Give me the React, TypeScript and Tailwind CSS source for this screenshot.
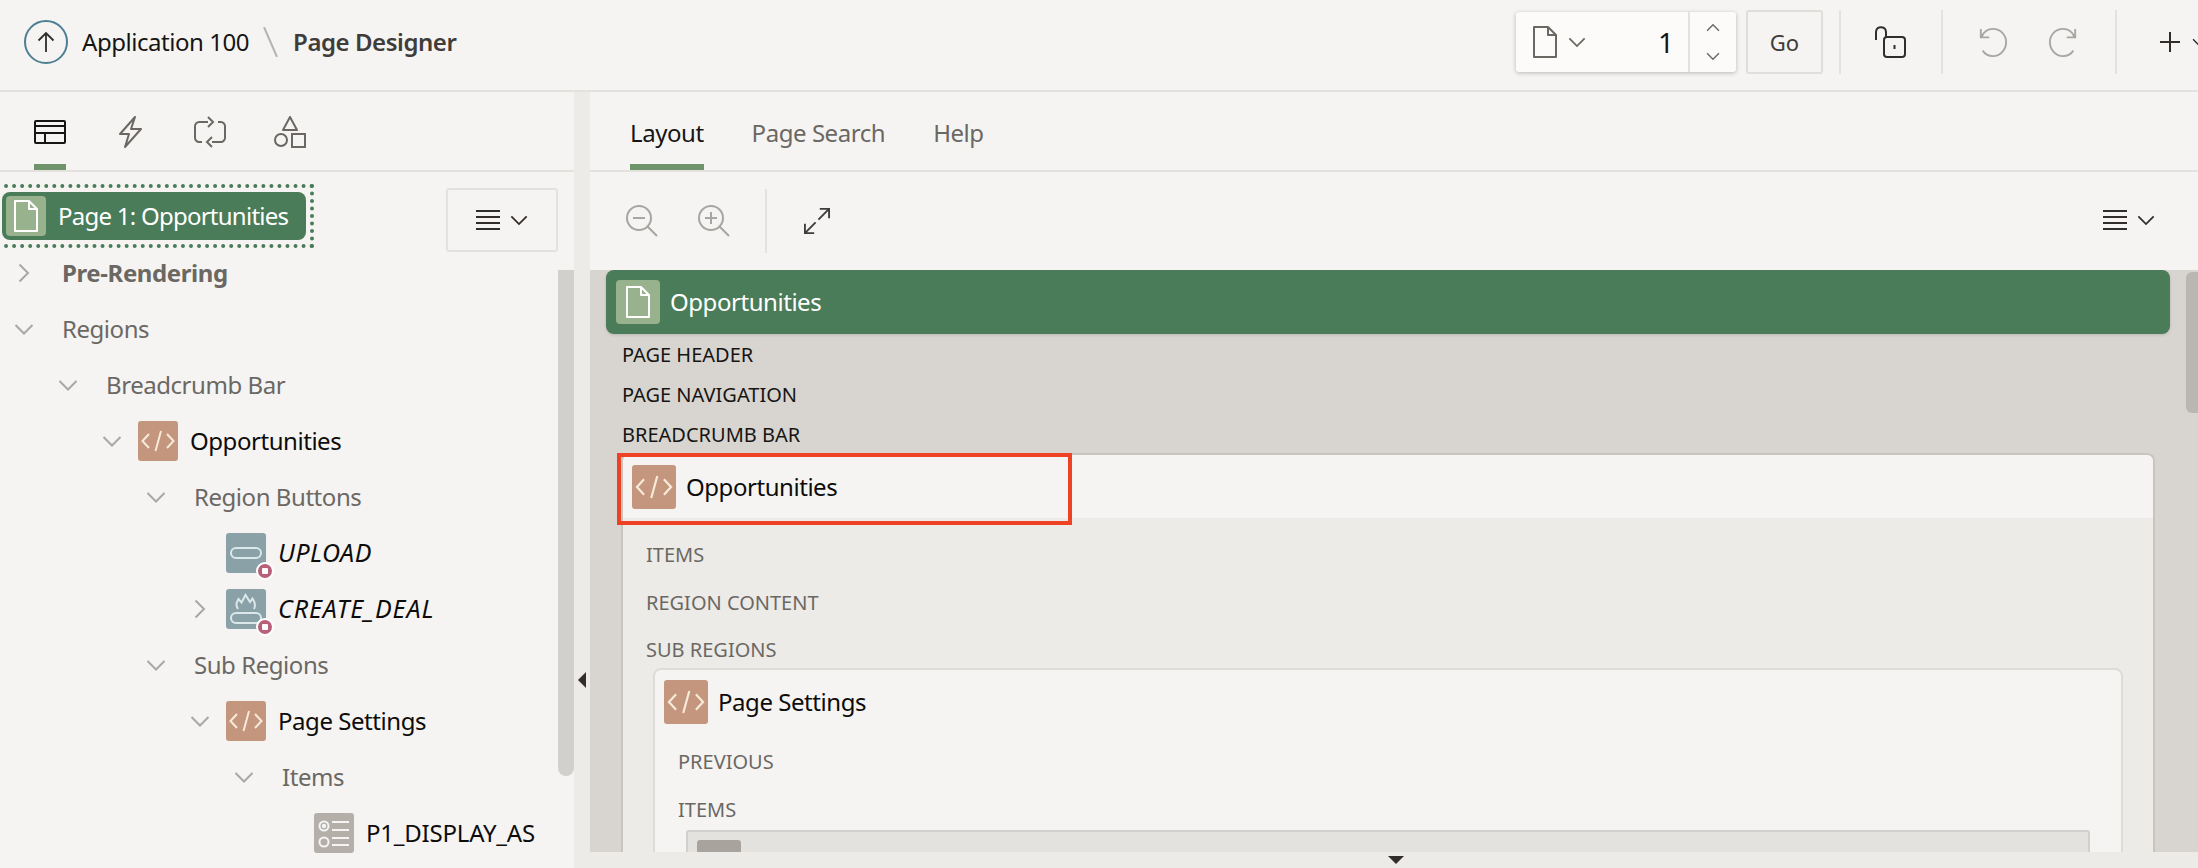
import React from "react";

const Chev = ({ dir = "down", cls = "w-5 h-5 text-[#a9a7a3]", sw = 2 }: { dir?: "down" | "right" | "up"; cls?: string; sw?: number }) => (
  <svg viewBox="0 0 20 20" className={cls} fill="none" stroke="currentColor" strokeWidth={sw}>
    {dir === "down" && <path d="M1.5 6 L10 14.5 L18.5 6" />}
    {dir === "up" && <path d="M1.5 14 L10 5.5 L18.5 14" />}
    {dir === "right" && <path d="M5.5 1.5 L14 10 L5.5 18.5" />}
  </svg>
);

const Doc = ({ cls, sw = 2 }: { cls: string; sw?: number }) => (
  <svg viewBox="0 0 24 32" className={cls} fill="none" stroke="currentColor" strokeWidth={sw}>
    <path d="M1 1 H15 L23 9 V31 H1 Z M15 1 V9 H23" strokeLinejoin="round" />
  </svg>
);

const Lines = ({ cls }: { cls: string }) => (
  <svg viewBox="0 0 24 24" className={cls} fill="none" stroke="currentColor" strokeWidth="2">
    <path d="M0 3 H24 M0 9 H24 M0 15 H24 M0 21 H24" />
  </svg>
);

const CodeTile = ({ cls = "w-10 h-10" }: { cls?: string }) => (
  <div className={`${cls} shrink-0 rounded-[3px] bg-[#c4967d] flex items-center justify-center`}>
    <svg viewBox="0 0 40 40" className="w-full h-full" fill="none" stroke="#f8ead9" strokeWidth="2">
      <path d="M11 13 L4.5 20 L11 27 M29 13 L35.5 20 L29 27 M23 10 L17.5 30" />
    </svg>
  </div>
);

const Badge = () => (
  <span className="absolute -right-[8px] -bottom-[7px] w-[18px] h-[18px] rounded-full bg-[#b8607a] border-2 border-white flex items-center justify-center">
    <span className="w-[6px] h-[6px] rounded-[1px] bg-white" />
  </span>
);

const ButtonTile = () => (
  <div className="relative w-10 h-10 shrink-0 rounded-[3px] bg-[#8aa1a8]">
    <svg viewBox="0 0 40 40" className="w-full h-full" fill="none" stroke="#dbe8ea" strokeWidth="2">
      <rect x="5" y="15" width="30" height="10" rx="5" />
    </svg>
    <Badge />
  </div>
);

const FlameTile = () => (
  <div className="relative w-10 h-10 shrink-0 rounded-[3px] bg-[#8aa1a8]">
    <svg viewBox="0 0 40 40" className="w-full h-full" fill="none" stroke="#dbe8ea" strokeWidth="2">
      <rect x="5" y="24" width="30" height="10" rx="5" />
      <path d="M12 20 C9 15 11 13 12.5 10 L15.500 13.500 L19.500 6 L24 13 L26.500 9.500 C29 13 30 16 28 20" />
    </svg>
    <Badge />
  </div>
);

const RadioTile = () => (
  <div className="w-10 h-10 shrink-0 rounded-[3px] bg-[#b4afa9]">
    <svg viewBox="0 0 40 40" className="w-full h-full" fill="none" stroke="#f5f4f2" strokeWidth="2">
      <circle cx="10" cy="13" r="4.5" />
      <circle cx="10" cy="13" r="1.2" fill="#f5f4f2" />
      <circle cx="10" cy="29" r="4.5" />
      <path d="M18 9 H35 M18 17 H35 M18 25 H35 M18 32 H35" />
    </svg>
  </div>
);

type RowProps = {
  pad: string;
  chev?: "down" | "right";
  tile?: React.ReactNode;
  text: string;
  textCls: string;
};

const Row = ({ pad, chev, tile, text, textCls }: RowProps) => (
  <div className={`h-14 flex items-center ${pad}`}>
    <span className="w-5 h-5 shrink-0">{chev && <Chev dir={chev} />}</span>
    {tile ? (
      <>
        <span className="ml-4 mr-3 shrink-0 flex">{tile}</span>
        <span className={textCls}>{text}</span>
      </>
    ) : (
      <span className={`ml-7 ${textCls}`}>{text}</span>
    )}
  </div>
);

const grayText = "text-[#6b6864] text-[24px] tracking-[-0.45px]";
const blackText = "text-[#0d0c0b] text-[24px] tracking-[-0.45px]";

const Tree = () => (
  <div className="-mt-[7px]">
    <Row pad="pl-[14px]" chev="right" text="Pre-Rendering" textCls="text-[#6b6864] text-[24px] tracking-[-0.4px] font-bold" />
    <Row pad="pl-[14px]" chev="down" text="Regions" textCls={grayText} />
    <Row pad="pl-[58px]" chev="down" text="Breadcrumb Bar" textCls={grayText} />
    <Row pad="pl-[102px]" chev="down" tile={<CodeTile />} text="Opportunities" textCls={blackText} />
    <Row pad="pl-[146px]" chev="down" text="Region Buttons" textCls={grayText} />
    <Row pad="pl-[190px]" tile={<ButtonTile />} text="UPLOAD" textCls="text-[#0d0c0b] text-[25px] italic tracking-[0.5px]" />
    <Row pad="pl-[190px]" chev="right" tile={<FlameTile />} text="CREATE_DEAL" textCls="text-[#0d0c0b] text-[25px] italic tracking-[1px]" />
    <Row pad="pl-[146px]" chev="down" text="Sub Regions" textCls={grayText} />
    <Row pad="pl-[190px]" chev="down" tile={<CodeTile />} text="Page Settings" textCls={blackText} />
    <Row pad="pl-[234px]" chev="down" text="Items" textCls={grayText} />
    <Row pad="pl-[278px]" tile={<RadioTile />} text="P1_DISPLAY_AS" textCls="text-[#0d0c0b] text-[24px] tracking-[-0.2px]" />
  </div>
);

const Header = () => (
  <header className="h-[92px] shrink-0 border-b-2 border-[#e4e2df] flex items-center pl-6 pb-[6px] overflow-hidden">
    <div className="w-11 h-11 rounded-full border-2 border-[#4d7f92] flex items-center justify-center">
      <svg viewBox="0 0 24 24" className="w-6 h-6" fill="none" stroke="#312d2a" strokeWidth="1.8">
        <path d="M12 22 V3 M4.5 10.5 L12 3 L19.500 10.500" />
      </svg>
    </div>
    <span className="ml-[14px] text-[24px] tracking-[-0.45px] text-[#161513]">Application 100</span>
    <svg viewBox="0 0 15 30" className="ml-[14px] w-[15px] h-[30px]" fill="none" stroke="#b5b3af" strokeWidth="2">
      <path d="M1 0 L14 30" />
    </svg>
    <span className="ml-[15px] text-[24px] tracking-[-0.45px] font-semibold text-[#3f3c3a]">Page Designer</span>

    <div className="ml-auto flex items-center">
      <div className="w-[220px] h-[60px] bg-[#fcfbfa] rounded-[3px] shadow-[0_1px_4px_rgba(0,0,0,0.25)] flex items-center">
        <Doc cls="ml-[17px] w-6 h-8 text-[#6b6864]" />
        <Chev cls="ml-[11px] w-[18px] h-[18px] text-[#6b6864]" />
        <span className="ml-auto mr-[14px] text-[28px] text-[#161513]">1</span>
        <div className="w-12 h-full border-l-2 border-[#e4e2df] flex flex-col items-center justify-center gap-[14px]">
          <Chev dir="up" cls="w-[14px] h-[14px] text-[#6b6864]" />
          <Chev cls="w-[14px] h-[14px] text-[#6b6864]" />
        </div>
      </div>
      <div className="ml-[10px] w-[77px] h-16 border-2 border-[#e0deda] rounded-[3px] flex items-center justify-center text-[22px] text-[#3f3c3a]">Go</div>
      <div className="ml-4 w-[2px] h-16 bg-[#e4e2df]" />
      <svg viewBox="0 0 32 32" className="ml-[33px] w-8 h-8" fill="none" stroke="#312d2a" strokeWidth="2">
        <path d="M2 14 V6 C2 -0.500 12 -0.500 12 6 V11" />
        <rect x="10" y="11" width="21" height="20" rx="3" />
        <path d="M20.500 19 V23" />
      </svg>
      <div className="ml-[35px] w-[2px] h-16 bg-[#e4e2df]" />
      <svg viewBox="0 0 32 32" className="ml-[35px] w-[30px] h-8" fill="none" stroke="#a8a6a2" strokeWidth="2">
        <path d="M3 2 V11 H12 M3.500 11 C6 5 11 2 16 2 C24 2 30 8.500 30 16 C30 24 24 31 16 31 C11 31 7 28.500 5 25" />
      </svg>
      <svg viewBox="0 0 32 32" className="ml-10 w-[30px] h-8" fill="none" stroke="#a8a6a2" strokeWidth="2">
        <path d="M29 2 V11 H20 M28.500 11 C26 5 21 2 16 2 C8 2 2 8.500 2 16 C2 24 8 31 16 31 C21 31 25 28.500 27 25" />
      </svg>
      <div className="ml-[37px] w-[2px] h-16 bg-[#e4e2df]" />
      <svg viewBox="0 0 20 20" className="ml-[43px] w-5 h-5" fill="none" stroke="#312d2a" strokeWidth="2">
        <path d="M10 0 V20 M0 10 H20" />
      </svg>
      <div className="ml-3 w-[6px] h-5 overflow-hidden flex items-center shrink-0">
        <Chev cls="w-[14px] h-[14px] shrink-0 text-[#312d2a]" />
      </div>
    </div>
  </header>
);

const LeftPanel = () => (
  <aside className="relative w-[574px] shrink-0 flex flex-col overflow-hidden">
    <div className="h-20 shrink-0 border-b-2 border-[#e4e2df] flex items-start gap-[52px] pl-[34px] relative">
      <div className="h-full relative w-8 flex justify-center">
        <svg viewBox="0 0 32 24" className="mt-[28px] w-8 h-6" fill="none" stroke="#161513" strokeWidth="2">
          <rect x="1" y="1" width="30" height="22" rx="1" />
          <path d="M1 6 H31 M1 13 H31 M11 13 V23" />
        </svg>
        <span className="absolute left-0 right-0 bottom-0 h-[6px] bg-[#6f936a]" />
      </div>
      <svg viewBox="0 0 24 32" className="mt-6 w-6 h-8" fill="none" stroke="#6b6864" strokeWidth="2">
        <path d="M17 1 L2 18 H11 L7 31 L23 13 H13 Z" strokeLinejoin="round" />
      </svg>
      <svg viewBox="0 0 32 32" className="mt-6 w-8 h-8" fill="none" stroke="#6b6864" strokeWidth="2">
        <path d="M14 6 H5 C3 6 1 8 1 10 V22 C1 24 3 26 5 26 H8 M14 1 L19 6 L14 11 M18 26 H27 C29 26 31 24 31 22 V10 C31 8 29 6 27 6 H24 M18 31 L13 26 L18 21" />
      </svg>
      <svg viewBox="0 0 32 32" className="mt-6 w-8 h-8 -ml-[4px]" fill="none" stroke="#6b6864" strokeWidth="2">
        <path d="M16 1 L23 14 H9 Z" strokeLinejoin="round" />
        <circle cx="7" cy="24" r="6" />
        <rect x="18" y="18" width="13" height="13" />
      </svg>
    </div>
    <div className="h-20 shrink-0 flex items-center justify-between">
      <div className="border-[4px] border-dotted border-[#4a7c59] h-[64px] w-[318px] -ml-[4px] pl-[2px] pr-[4px] flex items-center mt-2">
        <div className="h-12 w-full rounded-[8px] bg-[#4a7c59] flex items-center pl-[4px]">
          <div className="w-10 h-10 rounded-[4px] bg-[#98b28e] flex items-center justify-center">
            <Doc cls="w-6 h-8 text-white" />
          </div>
          <span className="ml-3 text-[24px] tracking-[-0.75px] text-white whitespace-nowrap">Page 1: Opportunities</span>
        </div>
      </div>
      <div className="mr-4 mt-4 w-[112px] h-16 border-2 border-[#e4e2df] rounded-[3px] flex items-center justify-center gap-[10px]">
        <Lines cls="w-6 h-6 text-[#312d2a]" />
        <Chev cls="w-[18px] h-[18px] text-[#312d2a]" />
      </div>
    </div>
    <div className="flex-1 overflow-hidden">
      <Tree />
    </div>
    <div className="absolute right-0 top-[178px] bottom-[92px] w-4 bg-[#d1d0cc] rounded-b-lg" />
  </aside>
);

const Label = ({ cls, children }: { cls: string; children: React.ReactNode }) => (
  <div className={`flex items-center text-[20px] ${cls}`}>{children}</div>
);

const Canvas = () => (
  <div className="relative flex-1 bg-[#d8d5d0] overflow-hidden pl-4 pr-7">
    <div className="h-16 rounded-[8px] bg-[#4a7c59] shadow-[0_1px_3px_rgba(0,0,0,0.15)] flex items-center pl-[10px]">
      <div className="w-11 h-11 rounded-[4px] bg-[#98b28e] flex items-center justify-center">
        <Doc cls="w-6 h-8 text-white" />
      </div>
      <span className="ml-[10px] text-[24px] tracking-[-0.45px] text-white">Opportunities</span>
    </div>
    <div className="pl-4 pt-[1px]">
      <Label cls="h-10 text-[#161513]">PAGE HEADER</Label>
      <Label cls="h-10 text-[#161513]">PAGE NAVIGATION</Label>
      <Label cls="h-10 text-[#161513]">BREADCRUMB BAR</Label>
    </div>
    <div className="relative ml-[15px] mr-[15px] -mt-[2px] rounded-t-[8px] border-2 border-b-0 border-[#c8c5c0] bg-[#ecebe7] h-[500px]">
      <div className="h-[63px] bg-[#f5f4f2] rounded-t-[6px] flex items-center pl-[9px]">
        <CodeTile cls="w-11 h-11" />
        <span className="ml-[10px] text-[24px] tracking-[-0.45px] text-[#0d0c0b]">Opportunities</span>
      </div>
      <div className="pl-[23px] pt-[13px]">
        <Label cls="h-12 text-[#6b6864]">ITEMS</Label>
        <Label cls="h-12 text-[#6b6864]">REGION CONTENT</Label>
        <Label cls="h-[46px] text-[#6b6864]">SUB REGIONS</Label>
      </div>
      <div className="ml-[30px] mr-[30px] -mt-[5px] rounded-t-[8px] border-2 border-b-0 border-[#dedcd8] bg-[#f5f4f2] h-[300px]">
        <div className="pl-[9px] pt-[10px] flex items-center">
          <CodeTile cls="w-11 h-11" />
          <span className="ml-[10px] text-[24px] tracking-[-0.45px] text-[#0d0c0b]">Page Settings</span>
        </div>
        <div className="pl-[23px] pt-[14px]">
          <Label cls="h-12 text-[#6b6864]">PREVIOUS</Label>
          <Label cls="h-12 text-[#6b6864]">ITEMS</Label>
        </div>
        <div className="ml-[31px] mr-[31px] -mt-[4px] rounded-t-[3px] border-2 border-b-0 border-[#d2d0cc] bg-[#e3e2de] h-[60px] pl-[9px] pt-[8px]">
          <div className="w-11 h-11 rounded-[3px] bg-[#a8a39d]" />
        </div>
      </div>
    </div>
    <div className="absolute left-[27px] top-[183px] w-[455px] h-[72px] border-[4px] border-[#ef4123]" />
    <div className="absolute right-0 top-[2px] w-3 h-[141px] bg-[#bab6b1] rounded-l-[6px]" />
  </div>
);

const RightPanel = () => (
  <main className="flex-1 min-w-0 flex flex-col">
    <div className="h-20 shrink-0 border-b-2 border-[#e4e2df] flex items-stretch pl-10 gap-12 text-[24px] tracking-[-0.45px]">
      <div className="relative flex items-center text-[#161513] pt-1">
        Layout
        <span className="absolute left-0 right-0 bottom-0 h-[6px] bg-[#6f936a]" />
      </div>
      <div className="flex items-center text-[#6b6864] pt-1">Page Search</div>
      <div className="flex items-center text-[#6b6864] pt-1">Help</div>
    </div>
    <div className="h-[98px] shrink-0 flex items-center pl-9 pr-[43px]">
      <svg viewBox="0 0 32 32" className="w-8 h-8" fill="none" stroke="#a8a6a2" strokeWidth="2">
        <circle cx="13" cy="13" r="12" />
        <path d="M7 13 H19 M21.500 21.500 L31 31" />
      </svg>
      <svg viewBox="0 0 32 32" className="ml-10 w-8 h-8" fill="none" stroke="#a8a6a2" strokeWidth="2">
        <circle cx="13" cy="13" r="12" />
        <path d="M7 13 H19 M13 7 V19 M21.500 21.500 L31 31" />
      </svg>
      <div className="ml-[35px] w-[2px] h-16 bg-[#e4e2df]" />
      <svg viewBox="0 0 28 28" className="ml-[37px] w-[26px] h-7" fill="none" stroke="#3f3c3a" strokeWidth="2">
        <path d="M17 1 H27 V11 M27 1 L15.500 12.500 M1 17 V27 H11 M1 27 L12.500 15.500" />
      </svg>
      <Lines cls="ml-auto -mt-[2px] w-6 h-6 text-[#312d2a]" />
      <Chev cls="ml-[10px] -mt-[2px] w-[18px] h-[18px] text-[#312d2a]" />
    </div>
    <Canvas />
    <div className="h-4 shrink-0 bg-[#ecebe7] flex items-center justify-center pl-[4px]">
      <svg viewBox="0 0 16 8" className="w-4 h-2" fill="#312d2a">
        <path d="M0 0 H16 L8 8 Z" />
      </svg>
    </div>
  </main>
);

export default function App() {
  return (
    <div className="w-[2198px] h-[868px] overflow-hidden bg-[#f5f4f2] flex flex-col font-['Noto_Sans',sans-serif]">
      <Header />
      <div className="flex-1 min-h-0 flex">
        <LeftPanel />
        <div className="w-4 shrink-0 bg-[#ecebe7] flex items-center justify-center">
          <svg viewBox="0 0 8 16" className="w-2 h-4 mt-[400px] -ml-[1px]" fill="#312d2a">
            <path d="M8 0 V16 L0 8 Z" />
          </svg>
        </div>
        <RightPanel />
      </div>
    </div>
  );
}
